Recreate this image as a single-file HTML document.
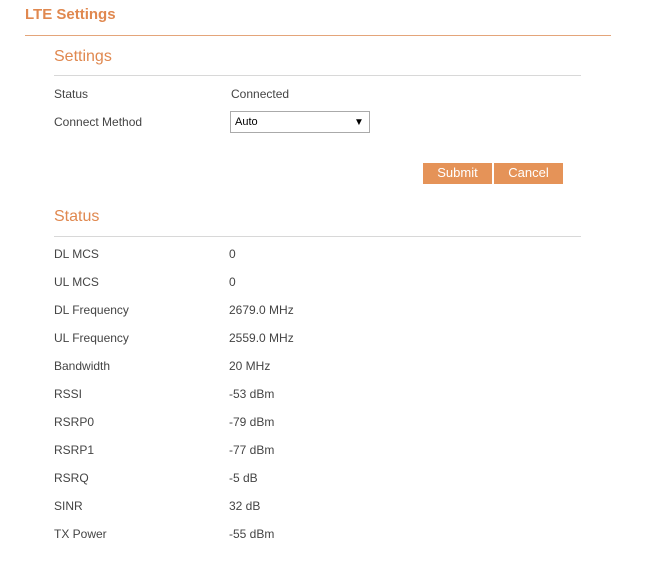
<!DOCTYPE html>
<html><head><style>
body{margin:0;width:660px;height:577px;background:#fff;font-family:"Liberation Sans",sans-serif;position:relative;overflow:hidden}
.a{position:absolute;white-space:nowrap}
.t{font-size:12px;color:#444;line-height:14px}
.h{color:#e0884f}
.line{position:absolute;height:1px}
.btn{position:absolute;top:163px;height:21px;width:69px;background:#e59358;color:#fff;font-size:13px;text-align:center;line-height:19px}
</style></head><body>
<div class="a h" style="left:25px;top:6px;font-size:15px;font-weight:bold">LTE Settings</div>
<div class="line" style="left:25px;top:35px;width:586px;background:#e4a57a"></div>
<div class="a h" style="left:54px;top:48px;font-size:16px">Settings</div>
<div class="line" style="left:54px;top:75px;width:527px;background:#d8d8d8"></div>
<div class="a t" style="left:54px;top:87px">Status</div>
<div class="a t" style="left:231px;top:87px">Connected</div>
<div class="a t" style="left:54px;top:115px">Connect Method</div>
<div class="a" style="left:230px;top:111px;width:138px;height:20px;border:1px solid #aaa;box-sizing:content-box"></div>
<div class="a" style="left:235px;top:116px;font-size:11px;color:#000">Auto</div>
<div class="a" style="left:354px;top:117px;font-size:10px;color:#000">▼</div>
<div class="btn" style="left:423px">Submit</div>
<div class="btn" style="left:494px">Cancel</div>
<div class="a h" style="left:54px;top:208px;font-size:16px">Status</div>
<div class="line" style="left:54px;top:236px;width:527px;background:#d8d8d8"></div>
<div class="a t" style="left:54px;top:247px">DL MCS</div><div class="a t" style="left:229px;top:247px">0</div>
<div class="a t" style="left:54px;top:275px">UL MCS</div><div class="a t" style="left:229px;top:275px">0</div>
<div class="a t" style="left:54px;top:303px">DL Frequency</div><div class="a t" style="left:229px;top:303px">2679.0 MHz</div>
<div class="a t" style="left:54px;top:331px">UL Frequency</div><div class="a t" style="left:229px;top:331px">2559.0 MHz</div>
<div class="a t" style="left:54px;top:359px">Bandwidth</div><div class="a t" style="left:229px;top:359px">20 MHz</div>
<div class="a t" style="left:54px;top:387px">RSSI</div><div class="a t" style="left:229px;top:387px">-53 dBm</div>
<div class="a t" style="left:54px;top:415px">RSRP0</div><div class="a t" style="left:229px;top:415px">-79 dBm</div>
<div class="a t" style="left:54px;top:443px">RSRP1</div><div class="a t" style="left:229px;top:443px">-77 dBm</div>
<div class="a t" style="left:54px;top:471px">RSRQ</div><div class="a t" style="left:229px;top:471px">-5 dB</div>
<div class="a t" style="left:54px;top:499px">SINR</div><div class="a t" style="left:229px;top:499px">32 dB</div>
<div class="a t" style="left:54px;top:527px">TX Power</div><div class="a t" style="left:229px;top:527px">-55 dBm</div>
</body></html>
